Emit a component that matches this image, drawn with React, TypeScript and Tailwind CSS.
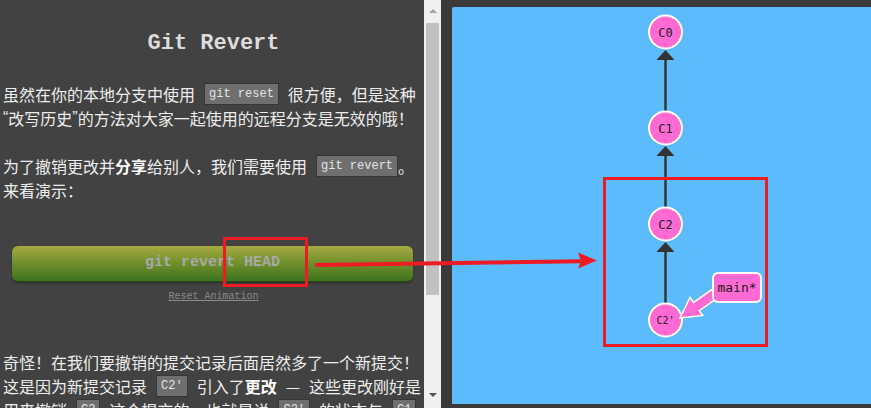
import React from 'react';

const cjk = { fontFamily: '"Noto Sans CJK SC", "Noto Sans", sans-serif' };
const mono = { fontFamily: '"Liberation Mono", "DejaVu Sans Mono", monospace' };

const Chip: React.FC<{ children: React.ReactNode }> = ({ children }) => (
  <span
    style={mono}
    className="mx-[9px] inline-flex h-[22px] items-center border border-[#363636] bg-[#6f6f6f] px-[4px] text-[12px] leading-none text-[#e4e4e4]"
  >
    {children}
  </span>
);

const Line: React.FC<{ children: React.ReactNode }> = ({ children }) => (
  <div className="flex h-6 items-center whitespace-nowrap">{children}</div>
);

const Quote: React.FC<{ c: string }> = ({ c }) => (
  <span style={{ fontFamily: '"Liberation Sans", sans-serif' }}>{c}</span>
);

// commit node in the graph
const Node: React.FC<{ y: number; label: string; small?: boolean }> = ({ y, label, small }) => (
  <g>
    <circle cx={665.5} cy={y} r={16.5} fill="#ff6ad5" stroke="#ffffff" strokeWidth={2} />
    <text
      x={665.5}
      y={y + (small ? 3.5 : 4.5)}
      textAnchor="middle"
      fontFamily='"DejaVu Sans Mono", monospace'
      fontSize={small ? 10 : 12}
      fill="#1a1a1a"
    >
      {label}
    </text>
  </g>
);

const Edge: React.FC<{ top: number; bottom: number }> = ({ top, bottom }) => (
  <g>
    <line x1={665.5} y1={top + 8} x2={665.5} y2={bottom} stroke="#333333" strokeWidth={2.5} />
    <polygon points={`665.5,${top} 674.5,${top + 10} 656.5,${top + 10}`} fill="#333333" />
  </g>
);

const App: React.FC = () => {
  return (
    <div className="relative flex h-[408px] w-[871px] overflow-hidden bg-[#3a3a3a]">
      {/* Lesson text */}
      <div className="flex h-full w-[441px] shrink-0 bg-[#424242]">
        <div style={cjk} className="w-[424px] overflow-hidden pl-[3px] pt-[30px] text-[16px] text-[#eeeeee]">
          <h1 style={mono} className="mb-6 text-center text-[22px] font-bold leading-[28px] text-[#dcdcdc]">
            Git Revert
          </h1>

          <Line>
            虽然在你的本地分支中使用<Chip>git reset</Chip>很方便，但是这种
          </Line>
          <Line>
            <Quote c="“" />改写历史<Quote c="”" />的方法对大家一起使用的远程分支是无效的哦！
          </Line>

          <div className="mt-6">
            <Line>
              为了撤销更改并<b className="text-white">分享</b>给别人，我们需要使用<Chip>git revert</Chip>
              <span className="-ml-[9px]">。</span>
            </Line>
            <Line>来看演示：</Line>
          </div>

          <div className="ml-[9px] mr-[11px] mt-[44px]">
            <button
              style={mono}
              className="flex h-9 w-full items-center justify-center rounded-[6px] border-b border-[#2c4a14] bg-gradient-to-b from-[#a6a941] via-[#6e8f2c] to-[#3b731c] text-[15px] font-bold text-[#a9a9a9] shadow-[0_1px_2px_rgba(0,0,0,0.4)]"
            >
              git revert HEAD
            </button>
          </div>

          <div className="mt-2 flex justify-center">
            <span style={mono} className="text-[10px] leading-[14px] text-[#8a8a8a] underline">
              Reset Animation
            </span>
          </div>

          <div className="mt-[46px]">
            <Line>奇怪！在我们要撤销的提交记录后面居然多了一个新提交！</Line>
            <Line>
              这是因为新提交记录<Chip>C2'</Chip>引入了<b className="text-white">更改</b>
              <span className="mx-[9px]">—</span>这些更改刚好是
            </Line>
            <Line>
              用来撤销<Chip>C2</Chip>这个提交的。也就是说<Chip>C2'</Chip>的状态与<Chip>C1</Chip>是相同的。
            </Line>
          </div>
        </div>

        {/* scrollbar */}
        <div className="flex h-full w-[17px] flex-col items-center bg-[#f0f0f0]">
          <div className="flex h-[23px] w-full items-center justify-center pb-[2px]">
            <div className="h-0 w-0 border-x-[4px] border-b-[4px] border-x-transparent border-b-[#a3a3a3]" />
          </div>
          <div className="h-[272px] w-[13px] bg-[#c1c1c1]" />
          <div className="flex-1" />
          <div className="flex h-[24px] w-full items-center justify-center pb-[2px]">
            <div className="h-0 w-0 border-x-[4px] border-t-[4px] border-x-transparent border-t-[#505050]" />
          </div>
        </div>
      </div>

      {/* Visualization */}
      <div className="flex flex-1 pb-[4px] pl-[11px] pt-[7px]">
        <div className="flex-1 rounded-tl-[2px] bg-[#5cbbfa]">
          <svg width="419" height="397" className="block">
            <g transform="translate(-452,-7)">
              <Edge top={50} bottom={111} />
              <Edge top={146} bottom={207} />
              <Edge top={242} bottom={303} />
              <Node y={32} label="C0" />
              <Node y={128} label="C1" />
              <Node y={224} label="C2" />
              <Node y={320} label="C2'" small />
              <polygon
                points="680,318 702.7,315.5 699.3,310.6 717.3,298 711.5,289.8 693.5,302.4 690.1,297.5"
                fill="#ff6ad5"
                stroke="#ffffff"
                strokeWidth={1.5}
              />
              <rect x={713} y={273} width={48} height={29} rx={5} fill="#ff6ad5" stroke="#ffffff" strokeWidth={2} />
              <text
                x={737}
                y={292}
                textAnchor="middle"
                fontFamily='"DejaVu Sans Mono", monospace'
                fontSize={13}
                fill="#1a1a1a"
              >
                main*
              </text>
            </g>
          </svg>
        </div>
      </div>

      {/* red annotations */}
      <svg className="pointer-events-none absolute inset-0" width="871" height="408">
        <rect x={224.5} y={238.5} width={82} height={47} fill="none" stroke="#ed1c24" strokeWidth={3} />
        <rect x={604.5} y={178.5} width={162} height={167} fill="none" stroke="#ed1c24" strokeWidth={3} />
        <line x1={317} y1={265} x2={582} y2={261.3} stroke="#ed1c24" strokeWidth={4} strokeLinecap="round" />
        <polygon points="597,260.5 578,252.5 581,261 578,268.5" fill="#ed1c24" />
      </svg>
    </div>
  );
};

export default App;
